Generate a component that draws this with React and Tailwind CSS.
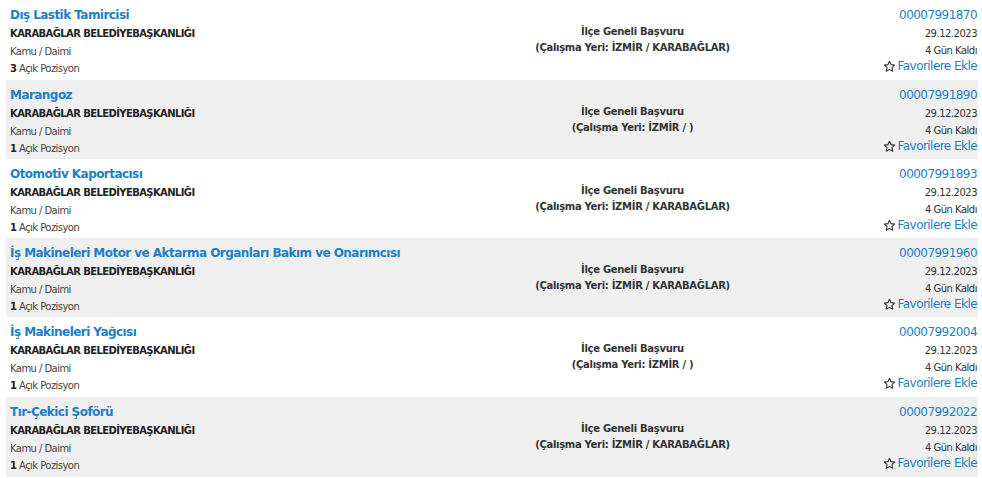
import React from 'react';

const jobs = [
  { title: 'Dış Lastik Tamircisi', count: 3, place: 'İZMİR / KARABAĞLAR', no: '00007991870', h: 'h-[80px]' },
  { title: 'Marangoz', count: 1, place: 'İZMİR / ', no: '00007991890', h: 'h-[79px]' },
  { title: 'Otomotiv Kaportacısı', count: 1, place: 'İZMİR / KARABAĞLAR', no: '00007991893', h: 'h-[79px]' },
  { title: 'İş Makineleri Motor ve Aktarma Organları Bakım ve Onarımcısı', count: 1, place: 'İZMİR / KARABAĞLAR', no: '00007991960', h: 'h-[79px]' },
  { title: 'İş Makineleri Yağcısı', count: 1, place: 'İZMİR / ', no: '00007992004', h: 'h-[80px]' },
  { title: 'Tır-Çekici Şoförü', count: 1, place: 'İZMİR / KARABAĞLAR', no: '00007992022', h: 'h-[80px]' },
];

function Star() {
  return (
    <svg width="13" height="13" viewBox="0 0 24 24" fill="none" stroke="#333" strokeWidth="2" strokeLinejoin="round" className="mr-[2px]">
      <path d="M12 2.5l2.9 6.1 6.6.8-4.9 4.6 1.3 6.6L12 17.3l-5.9 3.3 1.3-6.6-4.9-4.6 6.6-.8z" />
    </svg>
  );
}

function JobRow({ job, gray }) {
  return (
    <div className={`${job.h} flex pl-[4px] pr-[1px] ${gray ? 'bg-[#efefef]' : ''}`}>
      <div className="w-[478px] pt-[6px]">
        <div className="text-[12px] font-bold text-[#1b7fc6] leading-[18px] tracking-[-0.55px] whitespace-nowrap">{job.title}</div>
        <div className="text-[10px] font-bold text-[#222] leading-[18px] tracking-[-0.6px] mt-[1px]">KARABAĞLAR BELEDİYEBAŞKANLIĞI</div>
        <div className="text-[10px] text-[#444] leading-[17px] tracking-[-0.55px]">Kamu / Daimi</div>
        <div className="text-[10px] text-[#444] leading-[17px] tracking-[-0.55px]">
          <span className="font-bold text-[#222]">{job.count}</span> Açık Pozisyon
        </div>
      </div>
      <div className="flex-1 pt-[24px] text-center text-[10px] font-bold text-[#333] leading-[16px] tracking-[-0.3px]">
        <div>İlçe Geneli Başvuru</div>
        <div>(Çalışma Yeri: {job.place})</div>
      </div>
      <div className="w-[200px] pt-[6px] flex flex-col items-end">
        <div className="text-[12px] text-[#1b7fc6] leading-[18px] tracking-[-0.55px]">{job.no}</div>
        <div className="text-[10px] text-[#333] leading-[17px] tracking-[-0.5px] mt-[1px]">29.12.2023</div>
        <div className="text-[10px] text-[#333] leading-[16px] tracking-[-0.5px] mt-[1px]">4 Gün Kaldı</div>
        <div className="flex items-center text-[12px] text-[#1b7fc6] leading-[18px] tracking-[-0.55px] -mt-[2px]">
          <Star />
          Favorilere Ekle
        </div>
      </div>
    </div>
  );
}

export default function App() {
  return (
    <div className="w-[982px] h-[478px] bg-white overflow-hidden" style={{ fontFamily: '"DejaVu Sans", Verdana, sans-serif' }}>
      <div className="pl-[6px] pr-[4px]">
        {jobs.map((job, i) => (
          <JobRow key={job.no} job={job} gray={i % 2 === 1} />
        ))}
      </div>
    </div>
  );
}
